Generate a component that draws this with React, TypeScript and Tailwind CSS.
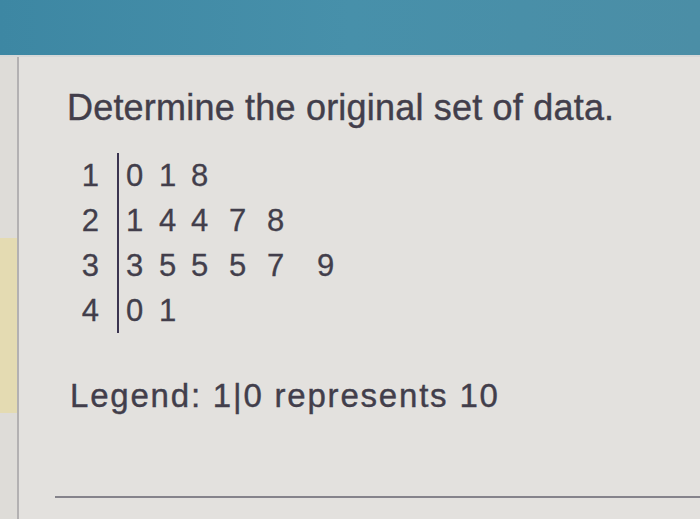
const stems = [
  { stem: '1', leaves: ['0', '1', '8'] },
  { stem: '2', leaves: ['1', '4', '4', '7', '8'] },
  { stem: '3', leaves: ['3', '5', '5', '5', '7', '9'] },
  { stem: '4', leaves: ['0', '1'] },
];

export default function App() {
  return (
    <div
      className="flex h-[519px] w-[700px] flex-col overflow-hidden bg-[#e3e1de] text-[#423e4b]"
      style={{ fontFamily: '"Liberation Sans", Arial, sans-serif' }}
    >
      {/* top bar */}
      <div className="h-[55px] shrink-0 bg-gradient-to-r from-[#3d87a3] via-[#4790aa] to-[#4b8ea6]" />
      <div className="h-[2px] shrink-0 bg-[#d6d8d8]" />

      <div className="flex flex-1">
        {/* left strip */}
        <div className="flex w-[17px] shrink-0 flex-col bg-[#dedcd8]">
          <div className="h-[181px]" />
          <div className="h-[175px] bg-[#e4dbb2]" />
        </div>
        <div className="w-[2px] shrink-0 bg-[#b3b1b2]" />

        {/* content */}
        <div className="flex flex-1 flex-col pt-[33px]">
          <h1 className="pl-[48px] text-[36px] leading-[36px] tracking-[0.2px] font-normal [-webkit-text-stroke:0.4px_#423e4b]">
            Determine the original set of data.
          </h1>

          <div className="mt-[27px] flex pl-[63px] text-[31px] leading-[45px] [-webkit-text-stroke:0.3px_#423e4b]">
            <div className="flex w-[17px] flex-col items-end">
              {stems.map((r) => (
                <div key={r.stem} className="h-[45px]">{r.stem}</div>
              ))}
            </div>
            <div className="ml-[18px] w-[2px] bg-[#3b3450]" />
            <div className="ml-[7px] flex flex-col">
              {stems.map((r) => (
                <div
                  key={r.stem}
                  className="grid h-[45px] grid-cols-[33px_32px_38px_38px_50px_20px]"
                >
                  {r.leaves.map((l, i) => (
                    <span key={i}>{l}</span>
                  ))}
                </div>
              ))}
            </div>
          </div>

          <p className="mt-[46px] pl-[51px] text-[33px] leading-[33px] tracking-[1.8px] [-webkit-text-stroke:0.4px_#423e4b]">
            Legend: 1|0 represents 10
          </p>

          <div className="mt-[84px] ml-[36px] h-[2px] bg-[#85838b]" />
        </div>
      </div>
    </div>
  );
}
